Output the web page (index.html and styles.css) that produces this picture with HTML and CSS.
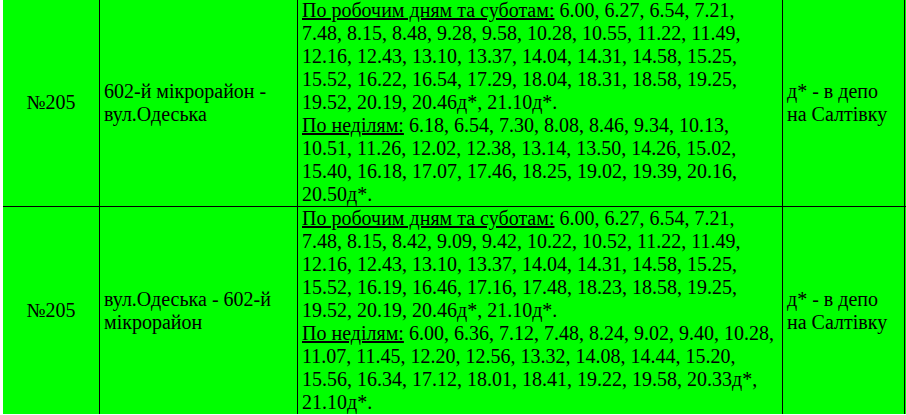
FILE: index.html
```html
<!DOCTYPE html>
<html lang="uk">
<head>
<meta charset="utf-8">
<title>Розклад</title>
<link rel="stylesheet" href="styles.css">
</head>
<body>
<table class="schedule">
  <tr>
    <td class="num">№205</td>
    <td class="route">602-й мікрорайон - вул.Одеська</td>
    <td class="times"><span class="label">По робочим дням та суботам:</span> 6.00, 6.27, 6.54, 7.21, 7.48, 8.15, 8.48, 9.28, 9.58, 10.28, 10.55, 11.22, 11.49, 12.16, 12.43, 13.10, 13.37, 14.04, 14.31, 14.58, 15.25, 15.52, 16.22, 16.54, 17.29, 18.04, 18.31, 18.58, 19.25, 19.52, 20.19, 20.46д*, 21.10д*.<br><span class="label">По неділям:</span> 6.18, 6.54, 7.30, 8.08, 8.46, 9.34, 10.13, 10.51, 11.26, 12.02, 12.38, 13.14, 13.50, 14.26, 15.02, 15.40, 16.18, 17.07, 17.46, 18.25, 19.02, 19.39, 20.16, 20.50д*.</td>
    <td class="note">д* - в депо на Салтівку</td>
    <td class="extra"></td>
  </tr>
  <tr class="last">
    <td class="num">№205</td>
    <td class="route">вул.Одеська - 602-й мікрорайон</td>
    <td class="times"><span class="label">По робочим дням та суботам:</span> 6.00, 6.27, 6.54, 7.21, 7.48, 8.15, 8.42, 9.09, 9.42, 10.22, 10.52, 11.22, 11.49, 12.16, 12.43, 13.10, 13.37, 14.04, 14.31, 14.58, 15.25, 15.52, 16.19, 16.46, 17.16, 17.48, 18.23, 18.58, 19.25, 19.52, 20.19, 20.46д*, 21.10д*.<br><span class="label">По неділям:</span> 6.00, 6.36, 7.12, 7.48, 8.24, 9.02, 9.40, 10.28, 11.07, 11.45, 12.20, 12.56, 13.32, 14.08, 14.44, 15.20, 15.56, 16.34, 17.12, 18.01, 18.41, 19.22, 19.58, 20.33д*, 21.10д*.</td>
    <td class="note">д* - в депо на Салтівку</td>
    <td class="extra"></td>
  </tr>
</table>
</body>
</html>
```
FILE: styles.css
```css
html, body {
  margin: 0;
  padding: 0;
  background: #ffffff;
  overflow: hidden;
}

.schedule {
  border-collapse: separate;
  border-spacing: 0;
  table-layout: fixed;
  width: 903px;
  margin: -1px 0 0 3px;
  background: #00ff00;
  font-family: "Liberation Serif", "Times New Roman", serif;
  font-size: 20px;
  line-height: normal;
  color: #000000;
}

.schedule td {
  box-sizing: border-box;
  padding: 0 4px;
  border-right: 1px solid #000000;
  border-bottom: 1px solid #000000;
  vertical-align: middle;
  text-align: left;
}

.schedule tr.last td {
  border-bottom: none;
}

.schedule td.num {
  width: 97px;
  text-align: center;
}

.schedule td.route {
  width: 198px;
}

.schedule td.times {
  width: 485px;
}

.schedule td.note {
  width: 122px;
}

.schedule td.extra {
  width: 1px;
  padding: 0;
  border-right: none;
}

.label {
  text-decoration: underline;
}
```
